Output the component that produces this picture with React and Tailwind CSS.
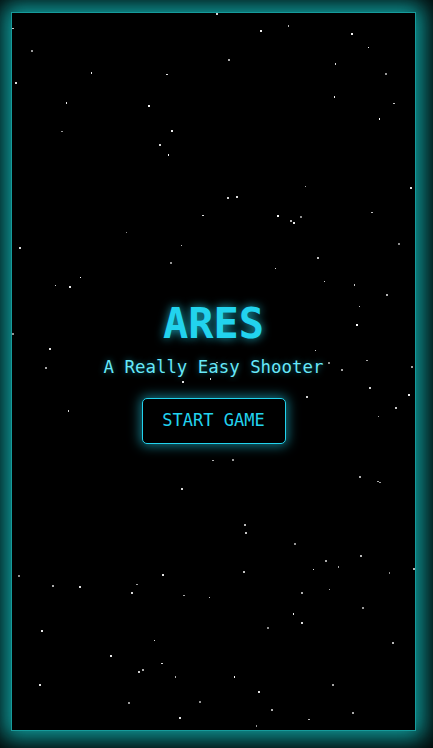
import React, { useMemo } from 'react';

function makeStars(count, seed) {
  let s = seed;
  const rand = () => {
    s = (s * 16807) % 2147483647;
    return (s - 1) / 2147483646;
  };
  const stars = [];
  for (let i = 0; i < count; i++) {
    stars.push({
      x: rand() * 100,
      y: rand() * 100,
      size: rand() > 0.55 ? 2 : 1.5,
      opacity: 0.55 + rand() * 0.45,
    });
  }
  return stars;
}

function Starfield() {
  const stars = useMemo(() => makeStars(120, 11), []);
  return (
    <div className="absolute inset-0 overflow-hidden">
      {stars.map((star, i) => (
        <div
          key={i}
          className="absolute bg-white"
          style={{
            left: `${star.x}%`,
            top: `${star.y}%`,
            width: star.size,
            height: star.size,
            opacity: star.opacity,
          }}
        />
      ))}
    </div>
  );
}

export default function App() {
  return (
    <div className="h-screen w-full bg-[#030606] pl-[11px] pr-[17px] pt-[12px] pb-[17px]">
      {/* Game frame */}
      <div className="relative h-full w-full bg-black border border-[#169a9a] shadow-[0_0_22px_8px_rgba(16,185,185,0.85)]">
        <Starfield />

        {/* Title screen */}
        <div className="relative flex h-full flex-col items-center justify-center pt-[4px] font-['DejaVu_Sans_Mono',monospace]">
          <h1 className="text-[42px] font-bold leading-none text-[#22d3ee] [text-shadow:0_0_10px_rgba(34,211,238,0.8)]">
            ARES
          </h1>
          <p className="mt-[9px] text-[17.4px] text-[#67e8f9] [text-shadow:0_0_6px_rgba(34,211,238,0.5)]">
            A Really Easy Shooter
          </p>
          <button className="mt-[18px] h-[46px] w-[144px] rounded-[5px] border border-[#22d3ee] bg-black text-[17px] text-[#22d3ee] shadow-[0_0_12px_2px_rgba(34,211,238,0.55)]">
            START GAME
          </button>
        </div>
      </div>
    </div>
  );
}
